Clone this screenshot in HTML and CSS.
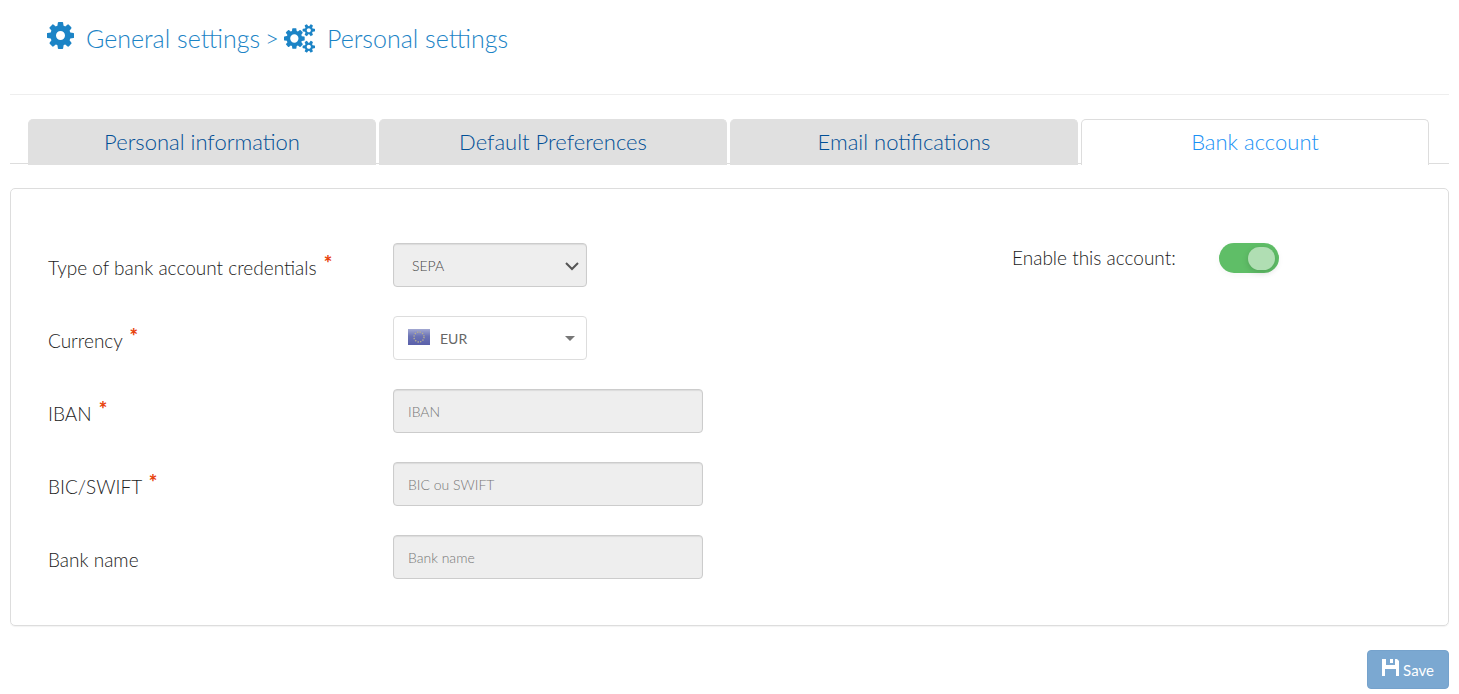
FILE: index.html
```html
<!DOCTYPE html>
<html lang="en">
<head>
	<meta charset="utf-8">
	<meta name="viewport" content="width=device-width, initial-scale=1">
	<title>Personal settings</title>
	<link rel="stylesheet" href="styles.css">
</head>

<body>
	<header class="page-header">
		<h1 class="breadcrumb">
			<svg class="cog" viewBox="0 128 1536 1536" aria-hidden="true"><path d="M1024 896q0-106-75-181t-181-75-181 75-75 181 75 181 181 75 181-75 75-181zm512-109v222q0 12-8 23t-20 13l-185 28q-19 54-39 91 35 50 107 138 10 12 10 25t-9 23q-27 37-99 108t-94 71q-12 0-26-9l-138-108q-44 23-91 38-16 136-29 186-7 28-36 28h-222q-14 0-24.500-8.500t-11.500-21.500l-28-184q-49-16-90-37l-141 107q-10 9-25 9-14 0-25-11-126-114-165-168-7-10-7-23 0-12 8-23 15-21 51-66.500t54-70.500q-27-50-41-99l-183-27q-13-2-21-12.500t-8-23.500v-222q0-12 8-23t19-13l186-28q14-46 39-92-40-57-107-138-10-12-10-24 0-10 9-23 26-36 98.500-107.500t94.500-71.500q13 0 26 10l138 107q44-23 91-38 16-136 29-186 7-28 36-28h222q14 0 24.500 8.500t11.500 21.500l28 184q49 16 90 37l142-107q9-9 24-9 13 0 25 10 129 119 165 170 7 8 7 22 0 12-8 23-15 21-51 66.500t-54 70.500q26 50 41 98l183 28q13 2 21 12.500t8 23.500z"/></svg>
			<a href="#">General settings</a>
			<span class="sep">&gt;</span>
			<svg class="cogs" viewBox="-64 0 1920 1792" aria-hidden="true"><path d="M832 896q0-106-75-181t-181-75-181 75-75 181 75 181 181 75 181-75 75-181zm768 512q0-52-38-90t-90-38-90 38-38 90q0 53 37.500 90.500t90.500 37.500 90.500-37.500 37.500-90.500zm0-1024q0-52-38-90t-90-38-90 38-38 90q0 53 37.500 90.500t90.500 37.500 90.500-37.500 37.500-90.500zm-384 421v185q0 10-7 19.500t-16 10.500l-155 24q-11 35-32 76 34 48 90 115 7 11 7 20 0 12-7 19-23 30-82.500 89.500t-78.500 59.500q-11 0-21-7l-115-90q-37 19-77 31-11 108-23 155-7 24-30 24h-186q-11 0-20-7.500t-10-17.500l-23-153q-34-10-75-31l-118 89q-7 7-20 7-11 0-21-8-144-133-144-160 0-9 7-19 10-14 41-53t47-61q-23-44-35-82l-152-24q-10-1-17-9.500t-7-19.500v-185q0-10 7-19.500t16-10.500l155-24q11-35 32-76-34-48-90-115-7-11-7-20 0-12 7-20 22-30 82-89t79-59q11 0 21 7l115 90q34-18 77-32 11-108 23-154 7-24 30-24h186q11 0 20 7.500t10 17.500l23 153q34 10 75 31l118-89q8-7 20-7 11 0 21 8 144 133 144 160 0 8-7 19-12 16-42 54t-45 60q23 48 34 82l152 23q10 2 17 10.500t7 19.500zm640 533v140q0 16-149 31-12 27-30 52 51 113 51 138 0 4-4 7-122 71-124 71-8 0-46-47t-52-68q-20 2-30 2t-30-2q-14 21-52 68t-46 47q-2 0-124-71-4-3-4-7 0-25 51-138-18-25-30-52-149-15-149-31v-140q0-16 149-31 13-29 30-52-51-113-51-138 0-4 4-7 4-2 35-20t59-34 30-16q8 0 46 46.500t52 67.500q20-2 30-2t30 2q51-71 92-112l6-2q4 0 124 70 4 3 4 7 0 25-51 138 17 23 30 52 149 15 149 31zm0-1024v140q0 16-149 31-12 27-30 52 51 113 51 138 0 4-4 7-122 71-124 71-8 0-46-47t-52-68q-20 2-30 2t-30-2q-14 21-52 68t-46 47q-2 0-124-71-4-3-4-7 0-25 51-138-18-25-30-52-149-15-149-31v-140q0-16 149-31 13-29 30-52-51-113-51-138 0-4 4-7 4-2 35-20t59-34 30-16q8 0 46 46.500t52 67.500q20-2 30-2t30 2q51-71 92-112l6-2q4 0 124 70 4 3 4 7 0 25-51 138 17 23 30 52 149 15 149 31z"/></svg>
			<a href="#">Personal settings</a>
		</h1>
	</header>

	<nav class="tabs">
		<a class="tab" href="#">Personal information</a>
		<a class="tab" href="#">Default Preferences</a>
		<a class="tab" href="#">Email notifications</a>
		<a class="tab active" href="#">Bank account</a>
	</nav>

	<form>
		<div class="panel">
			<div class="fields">
				<div class="row">
					<label for="type">Type of bank account credentials <sup>*</sup></label>
					<div class="select">
						<select id="type" class="control" disabled>
							<option>SEPA</option>
						</select>
						<svg class="chevron" viewBox="0 0 14 9" aria-hidden="true"><path d="M1 1l6 6 6-6"/></svg>
					</div>
				</div>
				<div class="row">
					<label for="currency">Currency <sup>*</sup></label>
					<div class="select">
						<svg class="flag" viewBox="0 0 22 16" aria-hidden="true">
							<defs>
								<linearGradient id="sky" x1="0" y1="0" x2="0" y2="1">
									<stop offset="0" stop-color="#a3a9d2"/>
									<stop offset=".45" stop-color="#6b73b5"/>
									<stop offset="1" stop-color="#5a60aa"/>
								</linearGradient>
							</defs>
							<rect width="22" height="16" fill="url(#sky)"/>
							<circle cx="11" cy="8" r="5" fill="none" stroke="#b5ad91" stroke-width="1.400" stroke-dasharray="1.300 1.318"/>
						</svg>
						<select id="currency" class="control currency">
							<option>EUR</option>
						</select>
						<svg class="caret" viewBox="0 0 10 5" aria-hidden="true"><path d="M0 0h10l-5 5z"/></svg>
					</div>
				</div>
				<div class="row">
					<label for="iban">IBAN <sup>*</sup></label>
					<input id="iban" class="control" type="text" placeholder="IBAN" disabled>
				</div>
				<div class="row">
					<label for="bic">BIC/SWIFT <sup>*</sup></label>
					<input id="bic" class="control" type="text" placeholder="BIC ou SWIFT" disabled>
				</div>
				<div class="row">
					<label for="bank">Bank name</label>
					<input id="bank" class="control" type="text" placeholder="Bank name" disabled>
				</div>
			</div>
			<div class="enable">
				<label for="enable">Enable this account:</label>
				<input id="enable" class="switch" type="checkbox" checked disabled>
			</div>
		</div>

		<div class="actions">
			<button class="save" type="submit" disabled>
				<svg viewBox="0 0 17 17" aria-hidden="true"><path d="M0 0h4v6h9V0h2l2 2v15h-3v-7H3v7H0zM8 0h3v4H8z"/></svg>
				Save
			</button>
		</div>
	</form>
</body>
</html>
```

FILE: styles.css
```css
* {
	box-sizing: border-box;
}
body {
	margin: 0 10px;
	background: #fff;
	color: #222;
	font-family: Lato, "Open Sans", sans-serif;
	font-weight: 300;
}
a {
	color: inherit;
	text-decoration: none;
}

/* breadcrumb */
.page-header {
	padding: 19px 37px;
	height: 95px;
	border-bottom: 1px solid #eee;
}
.breadcrumb {
	display: flex;
	align-items: center;
	margin: 0;
	color: #1c84c6;
	font-size: 25px;
	font-weight: 300;
	line-height: 38px;
}
.breadcrumb svg {
	fill: currentColor;
}
.cog {
	width: 27px;
	height: 27px;
	margin: 0 12px 6px 0;
}
.cogs {
	width: 31px;
	height: 29px;
	margin-right: 12px;
}
.sep {
	margin: 0 5px;
	font-size: 24px;
}

/* tabs */
.tabs {
	display: grid;
	grid-template-columns: repeat(4, 1fr);
	gap: 3px;
	margin-top: 24px;
	padding: 0 20px 0 18px;
	background: linear-gradient(#ddd, #ddd) 0 44px / 100% 1px no-repeat;
}
.tab {
	height: 46px;
	border: 1px solid #e0e0e0;
	border-bottom: 0;
	border-radius: 5px 5px 0 0;
	background: #e0e0e0;
	color: #004f96;
	font-size: 22px;
	line-height: 44px;
	text-align: center;
}
.tab.active {
	border-color: #ddd;
	background: #fff;
	color: #1a91f5;
}

/* form */
.panel {
	display: grid;
	grid-template-columns: 29fr 12fr;
	margin-top: 23px;
	padding: 54px 37px 46px;
	border: 1px solid #ddd;
	border-radius: 5px;
	box-shadow: 0 1px 1px rgba(0, 0, 0, .05);
}
.fields {
	display: grid;
	gap: 29px;
}
.row {
	display: grid;
	grid-template-columns: 345px 310px;
	align-items: center;
}
.row label,
.enable label {
	font-size: 19px;
	line-height: 30px;
}
.row label {
	padding-top: 6px;
}
sup {
	margin-left: 2px;
	color: #e8430c;
	font-size: 20px;
	font-weight: 900;
	line-height: 0;
	vertical-align: 4px;
}
.control {
	display: block;
	width: 100%;
	height: 44px;
	padding: 0 14px;
	border: 1px solid #ccc;
	border-radius: 4px;
	background: #eee;
	box-shadow: inset 0 1px 1px rgba(0, 0, 0, .08);
	color: #444;
	font: 300 14px Lato, "Open Sans", sans-serif;
	appearance: none;
	opacity: 1;
}
.control::placeholder {
	color: #777;
}
.select {
	position: relative;
	width: 194px;
}
.select .control {
	padding-left: 18px;
}
.select .currency {
	padding-left: 46px;
	border-color: #ddd;
	background: #fff;
	box-shadow: none;
	color: #666;
	font-weight: 400;
}
.select svg {
	position: absolute;
	pointer-events: none;
}
.chevron {
	top: 19px;
	right: 8px;
	width: 14px;
	height: 9px;
	fill: none;
	stroke: #555;
	stroke-width: 2;
}
.flag {
	top: 13px;
	left: 15px;
	width: 22px;
	height: 16px;
}
.caret {
	top: 20px;
	right: 12px;
	width: 10px;
	height: 5px;
	fill: #777;
}

/* on/off switch */
.enable {
	display: grid;
	grid-template-columns: 207px 60px;
	align-self: start;
}
.switch {
	position: relative;
	width: 60px;
	height: 30px;
	margin: 0;
	border-radius: 15px;
	background: #5fbe67;
	box-shadow: 0 2px 6px rgba(0, 0, 0, .04);
	appearance: none;
}
.switch::before {
	content: "";
	position: absolute;
	top: 4px;
	right: 4px;
	width: 27px;
	height: 23px;
	border-radius: 12px;
	background: #b0deb3;
	box-shadow: 0 2px 6px rgba(0, 0, 0, .15);
}

.actions {
	display: flex;
	justify-content: flex-end;
	margin-top: 24px;
}
.save {
	display: flex;
	align-items: center;
	justify-content: center;
	gap: 4px;
	width: 82px;
	height: 39px;
	border: 1px solid #75a2cc;
	border-radius: 4px;
	background: #7ba8d1;
	color: #fff;
	font: 400 15px Lato, "Open Sans", sans-serif;
}
.save svg {
	width: 17px;
	height: 17px;
	margin-bottom: 4px;
	fill: #fff;
}
```
